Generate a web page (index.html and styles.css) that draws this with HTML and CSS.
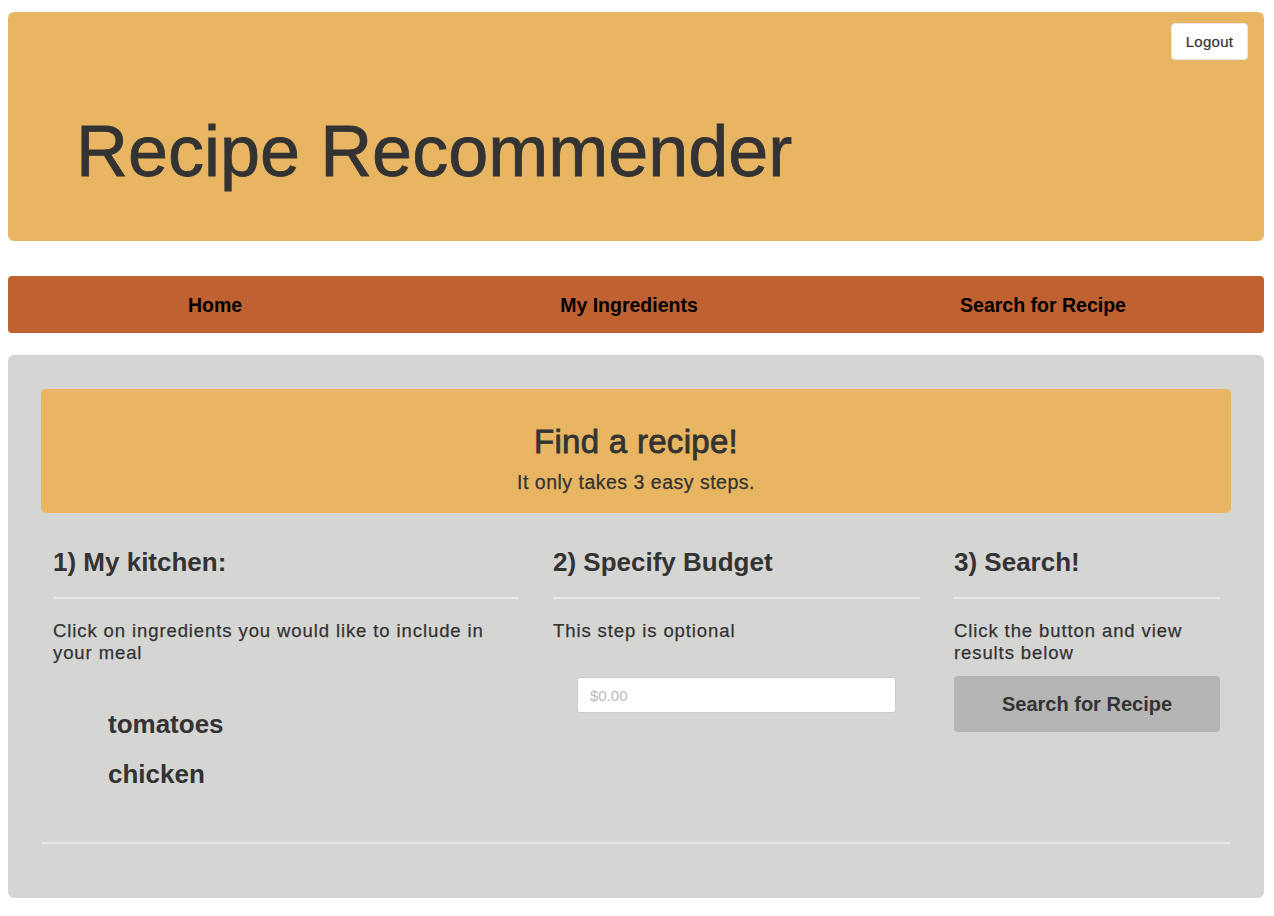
FILE: index.html
```html
<!DOCTYPE html>
<html>
<head>
<meta charset="utf-8">
<link rel="stylesheet" href="styles.css">
</head>
<body>
<header class="masthead">
  <button class="logout">Logout</button>
  <h1 class="title">Recipe Recommender</h1>
</header>
<nav class="nav">
  <a class="nav-item">Home</a>
  <a class="nav-item">My Ingredients</a>
  <a class="nav-item">Search for Recipe</a>
</nav>
<main class="panel">
  <section class="jumbo">
    <h2 class="jumbo-title">Find a recipe!</h2>
    <p class="jumbo-sub">It only takes 3 easy steps.</p>
  </section>
  <div class="steps">
    <div class="step">
      <h3 class="step-title">1) My kitchen:</h3>
      <hr class="rule">
      <p class="step-text">Click on ingredients you would like to include in your meal</p>
      <ul class="ingredients">
        <li>tomatoes</li>
        <li>chicken</li>
      </ul>
    </div>
    <div class="step">
      <h3 class="step-title">2) Specify Budget</h3>
      <hr class="rule">
      <p class="step-text">This step is optional</p>
      <div class="budget-wrap"><input class="budget" type="text" placeholder="$0.00"></div>
    </div>
    <div class="step">
      <h3 class="step-title">3) Search!</h3>
      <hr class="rule">
      <p class="step-text">Click the button and view results below</p>
      <button class="search-btn">Search for Recipe</button>
    </div>
  </div>
  <hr class="bottom-rule">
</main>
</body>
</html>
```

FILE: styles.css
```css
* { box-sizing: border-box; }
html, body { margin: 0; padding: 0; background: #fff; }
body {
  font-family: "Liberation Sans", Arial, sans-serif;
  color: #333;
  padding: 12px 10px 0 8px;
}
.masthead {
  background: #e8b663;
  border-radius: 6px;
  height: 229px;
  display: flex;
  flex-direction: column;
  padding: 11px 16px 0 68px;
}
.logout {
  align-self: flex-end;
  background: #fff;
  border: 1px solid #e6e6e6;
  border-radius: 4px;
  width: 77px;
  height: 37px;
  font-family: "Liberation Sans", Arial, sans-serif;
  font-size: 15px;
  letter-spacing: 0.3px;
  color: #333;
  padding: 0;
  -webkit-text-stroke: 0.2px #333;
}
.title {
  margin: 51px 0 0 0;
  font-size: 72px;
  font-weight: normal;
  line-height: 80px;
  color: #333;
  -webkit-text-stroke: 0.8px #333;
}
.nav {
  margin-top: 35px;
  height: 57px;
  background: #bf6130;
  border-radius: 4px;
  display: grid;
  grid-template-columns: 1fr 1fr 1fr;
  align-items: center;
  padding: 2px 14px 0 0;
}
.nav-item {
  text-align: center;
  font-weight: bold;
  font-size: 19.5px;
  color: #000;
}
.panel {
  margin-top: 22px;
  background: #d5d5d3;
  border-radius: 6px;
  height: 543px;
  padding: 34px 33px 0 33px;
}
.jumbo {
  background: #e8b663;
  border-radius: 5px;
  height: 124px;
  text-align: center;
  padding-top: 34px;
}
.jumbo-title {
  margin: 0;
  font-size: 33px;
  font-weight: normal;
  line-height: 38px;
  letter-spacing: 0.3px;
  -webkit-text-stroke: 0.8px #333;
}
.jumbo-sub {
  margin: 9px 0 0 0;
  font-size: 19.5px;
  line-height: 24px;
  letter-spacing: 0.5px;
  -webkit-text-stroke: 0.25px #333;
}
.steps {
  display: grid;
  grid-template-columns: 466px 367px 266px;
  column-gap: 34px;
  padding-left: 12px;
  margin-top: 33px;
  height: 296px;
}
.step-title {
  margin: 0;
  font-size: 26px;
  font-weight: bold;
  line-height: 32px;
}
.rule {
  border: 0;
  border-top: 2px solid #e9e9e7;
  margin: 19px 0 21px 0;
}
.step-text {
  margin: 0;
  font-size: 18.5px;
  line-height: 22px;
  letter-spacing: 0.9px;
  -webkit-text-stroke: 0.25px #333;
}
.ingredients {
  list-style: none;
  margin: 44px 0 0 0;
  padding: 0 0 0 55px;
}
.ingredients li {
  font-size: 26px;
  font-weight: bold;
  line-height: 32px;
  margin-bottom: 18px;
}
.budget-wrap {
  margin-top: 35px;
  padding: 0 24px;
}
.budget {
  width: 100%;
  height: 36px;
  background: #fff;
  border: 1px solid #ccc;
  border-radius: 3px;
  padding: 0 12px;
  font-family: "Liberation Sans", Arial, sans-serif;
  font-size: 15px;
  color: #333;
}
.budget::placeholder { color: #bbb; }
.search-btn {
  margin-top: 12px;
  width: 100%;
  height: 56px;
  background: #b5b5b5;
  border: 0;
  border-radius: 4px;
  font-family: "Liberation Sans", Arial, sans-serif;
  font-size: 20px;
  font-weight: bold;
  color: #333;
}
.bottom-rule {
  border: 0;
  border-top: 2px solid #e6e6e4;
  margin: 0;
}
```
